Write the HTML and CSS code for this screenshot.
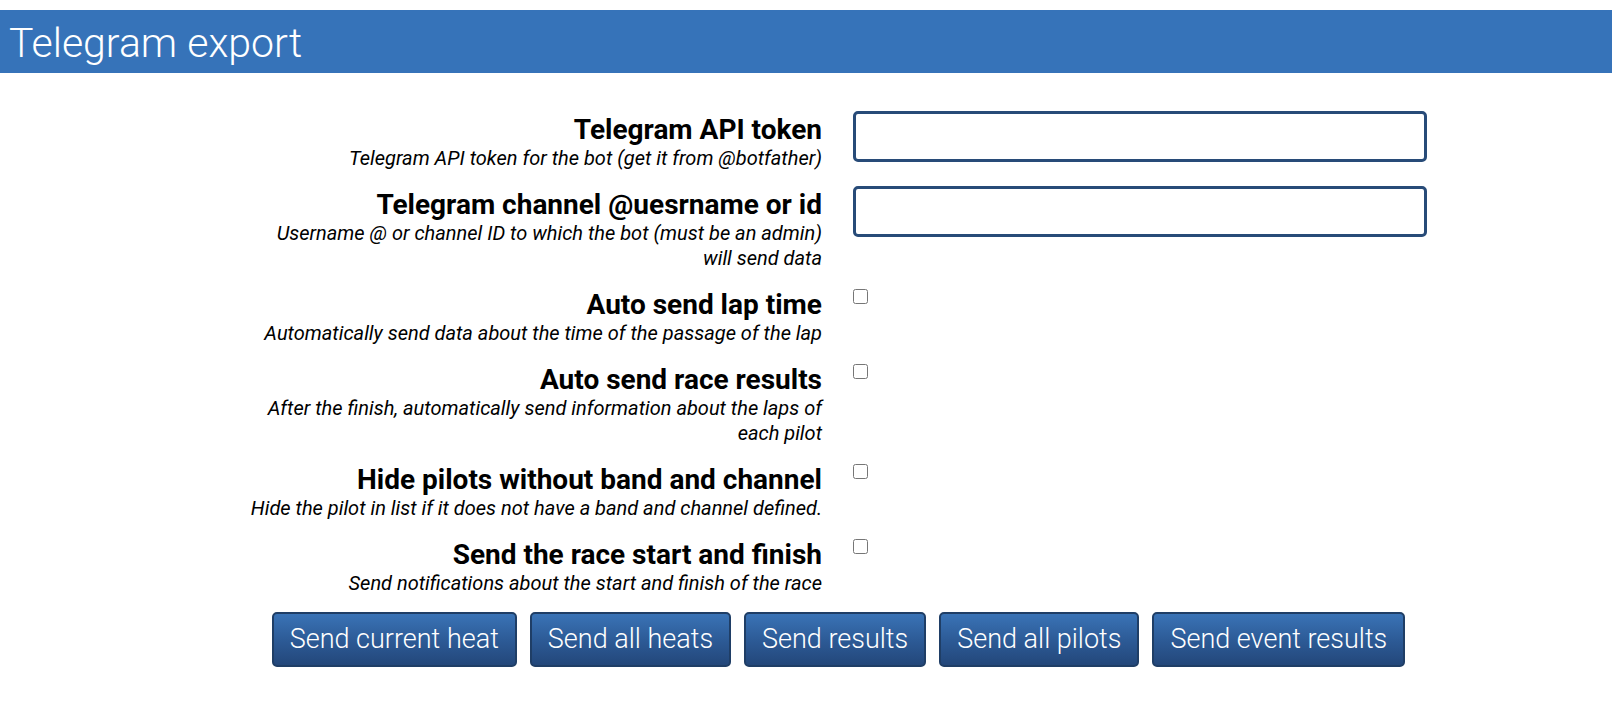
FILE: index.html
```html
<!DOCTYPE html>
<html lang="en">
<head>
<meta charset="utf-8">
<title>Telegram export</title>
<link rel="stylesheet" href="styles.css">
</head>
<body>
<header class="panel-header">Telegram export</header>
<main class="panel-body">
  <form class="settings">
    <div class="row">
      <div class="label">
        <div class="label-title">Telegram API token</div>
        <div class="label-desc">Telegram API token for the bot (get it from @botfather)</div>
      </div>
      <div class="control"><input class="text-input" type="text"></div>
    </div>
    <div class="row">
      <div class="label">
        <div class="label-title">Telegram channel @uesrname or id</div>
        <div class="label-desc">Username @ or channel ID to which the bot (must be an admin) will send data</div>
      </div>
      <div class="control"><input class="text-input" type="text"></div>
    </div>
    <div class="row">
      <div class="label">
        <div class="label-title">Auto send lap time</div>
        <div class="label-desc">Automatically send data about the time of the passage of the lap</div>
      </div>
      <div class="control"><input class="check" type="checkbox"></div>
    </div>
    <div class="row">
      <div class="label">
        <div class="label-title">Auto send race results</div>
        <div class="label-desc">After the finish, automatically send information about the laps of each pilot</div>
      </div>
      <div class="control"><input class="check" type="checkbox"></div>
    </div>
    <div class="row">
      <div class="label">
        <div class="label-title">Hide pilots without band and channel</div>
        <div class="label-desc">Hide the pilot in list if it does not have a band and channel defined.</div>
      </div>
      <div class="control"><input class="check" type="checkbox"></div>
    </div>
    <div class="row">
      <div class="label">
        <div class="label-title">Send the race start and finish</div>
        <div class="label-desc">Send notifications about the start and finish of the race</div>
      </div>
      <div class="control"><input class="check" type="checkbox"></div>
    </div>
    <div class="actions">
      <button type="button" class="btn">Send current heat</button>
      <button type="button" class="btn">Send all heats</button>
      <button type="button" class="btn">Send results</button>
      <button type="button" class="btn">Send all pilots</button>
      <button type="button" class="btn">Send event results</button>
    </div>
  </form>
</main>
</body>
</html>
```
FILE: styles.css
```css
html, body {
  margin: 0;
  padding: 0;
  background: #ffffff;
}

body {
  font-family: Roboto, "Noto Sans", "Liberation Sans", sans-serif;
  color: #000;
}

.panel-header {
  margin-top: 10px;
  height: 63px;
  box-sizing: border-box;
  padding: 4px 0 0 9px;
  background: #3673b9;
  color: #fff;
  font-size: 41px;
  font-weight: 300;
  line-height: 59px;
  white-space: nowrap;
}

.panel-body {
  padding: 35px 0 0 65px;
}

.settings {
  width: 1177px;
  margin: 0 auto;
  display: flex;
  flex-direction: column;
}

.row {
  display: grid;
  grid-template-columns: 572px 574px;
  column-gap: 31px;
  padding-bottom: 12px;
}

.label {
  padding-top: 6px;
  text-align: right;
}

.label-title {
  font-size: 28px;
  font-weight: 700;
  line-height: 32px;
}

.label-desc {
  font-size: 20px;
  font-style: italic;
  line-height: 25px;
}

.control {
  padding-top: 3px;
}

.text-input {
  display: block;
  width: 574px;
  height: 51px;
  box-sizing: border-box;
  margin: 0;
  border: 3px solid #284b78;
  border-radius: 5px;
  background: #fff;
  font-family: inherit;
  font-size: 20px;
  padding: 0 10px;
}

.check {
  display: block;
  width: 15px;
  height: 15px;
  margin: 3px 0 0 0;
}

.actions {
  display: flex;
  justify-content: center;
  gap: 13px;
  margin-top: 4px;
}

.btn {
  height: 55px;
  box-sizing: border-box;
  padding: 0 16px;
  border: 2px solid #1f3e66;
  border-radius: 5px;
  background: linear-gradient(to bottom, #3a73b6 0%, #2c5994 55%, #23477a 100%);
  color: #fff;
  font-family: Roboto, "Noto Sans", sans-serif;
  font-size: 27px;
  font-weight: 300;
  line-height: 51px;
  white-space: nowrap;
  cursor: pointer;
}
```
